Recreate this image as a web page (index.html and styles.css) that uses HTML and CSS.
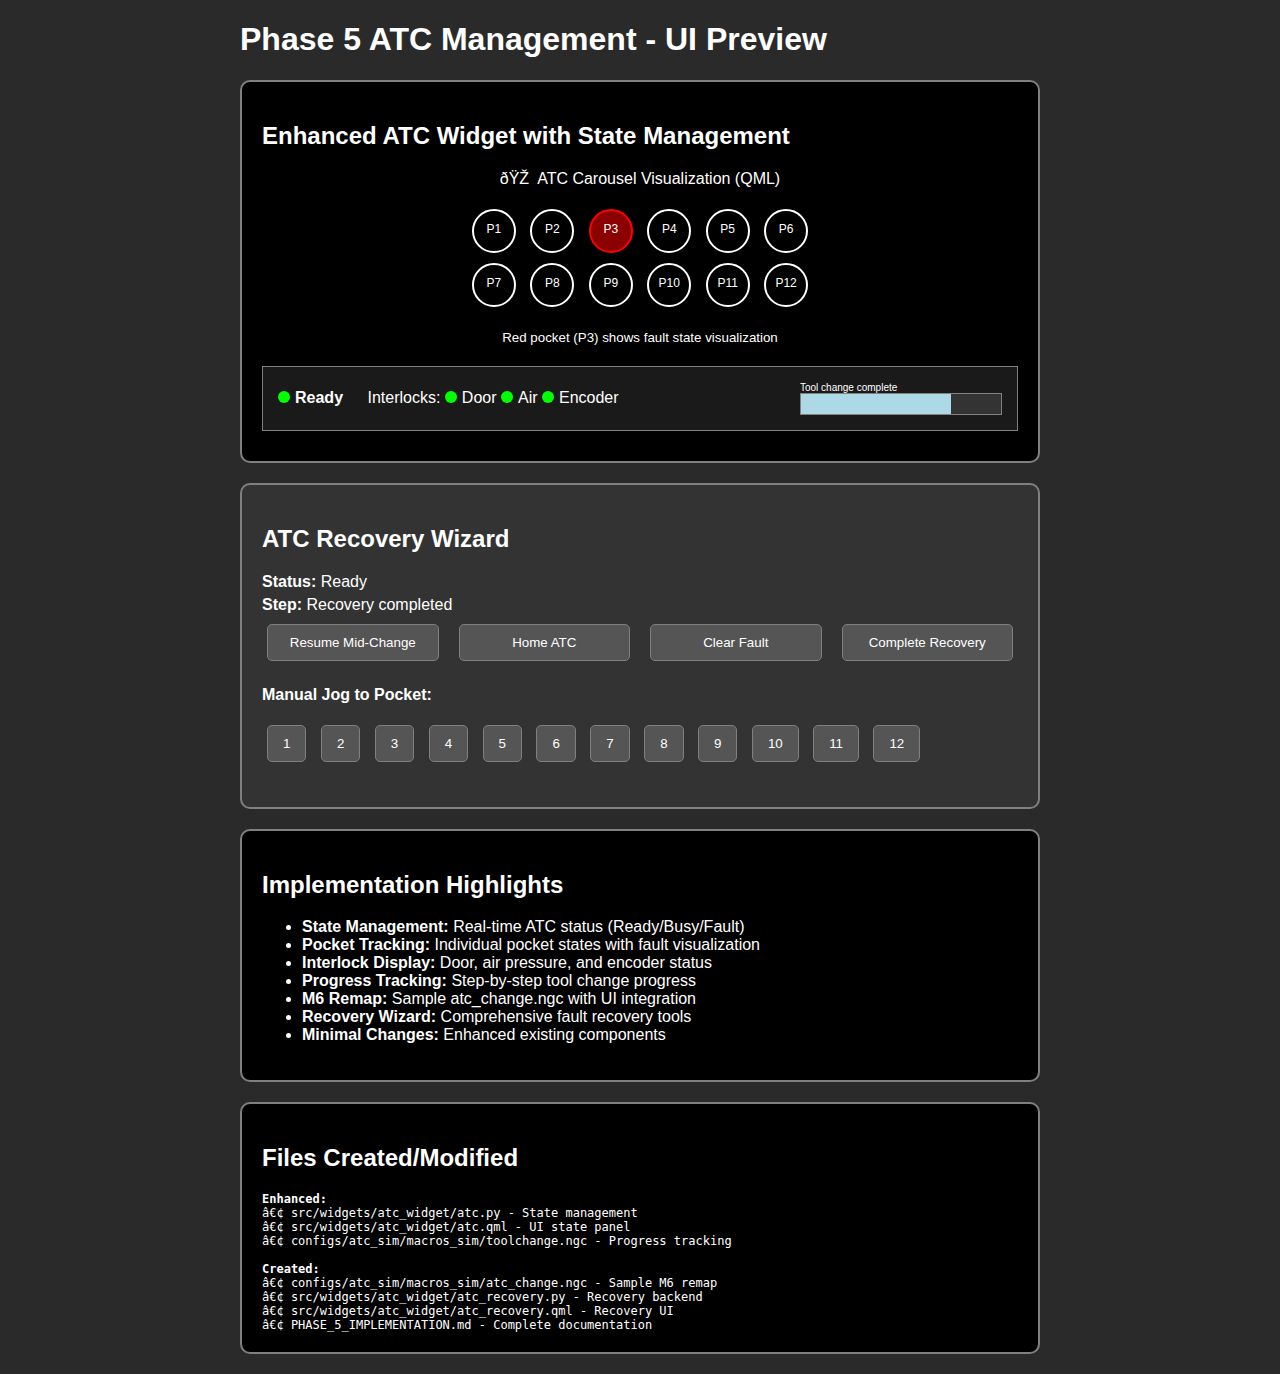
FILE: index.html
```html
<!DOCTYPE html>
<html lang="en">
<head>
  <meta charset="utf-8">
  <meta name="viewport" content="width=device-width, initial-scale=1">
  <title>Phase 5 ATC Management - UI Preview</title>
  <link rel="stylesheet" href="styles.css">
</head>
<body>
  <main class="container">
    <h1 class="page-title">Phase 5 ATC Management - UI Preview</h1>

    <section class="panel">
      <h2 class="panel-title">Enhanced ATC Widget with State Management</h2>
      <div class="carousel">
        <p class="carousel-title">ðŸŽ&nbsp; ATC Carousel Visualization (QML)</p>
        <div class="pockets">
          <div>
            <span class="pocket">P1</span>
            <span class="pocket">P2</span>
            <span class="pocket pocket-fault">P3</span>
            <span class="pocket">P4</span>
            <span class="pocket">P5</span>
            <span class="pocket">P6</span>
          </div>
          <div>
            <span class="pocket">P7</span>
            <span class="pocket">P8</span>
            <span class="pocket">P9</span>
            <span class="pocket">P10</span>
            <span class="pocket">P11</span>
            <span class="pocket">P12</span>
          </div>
        </div>
        <p class="carousel-note"><small>Red pocket (P3) shows fault state visualization</small></p>
      </div>
      <div class="status-bar">
        <div class="status-group">
          <span class="dot"></span><strong>Ready</strong>
          <span class="interlocks">Interlocks:
            <span class="dot"></span>Door
            <span class="dot"></span>Air
            <span class="dot"></span>Encoder</span>
        </div>
        <div class="tool-change">
          <label class="tool-change-label" for="tool-progress">Tool change complete</label>
          <progress class="tool-progress" id="tool-progress" value="75" max="100"></progress>
        </div>
      </div>
    </section>

    <section class="panel panel-wizard">
      <h2 class="panel-title">ATC Recovery Wizard</h2>
      <div class="wizard-status">
        <div><strong>Status:</strong> Ready</div>
        <div><strong>Step:</strong> Recovery completed</div>
      </div>
      <div class="actions">
        <button class="button" type="button">Resume Mid-Change</button>
        <button class="button" type="button">Home ATC</button>
        <button class="button" type="button">Clear Fault</button>
        <button class="button" type="button">Complete Recovery</button>
      </div>
      <p class="jog-title"><strong>Manual Jog to Pocket:</strong></p>
      <div class="jog">
        <button class="button jog-button" type="button">1</button>
        <button class="button jog-button" type="button">2</button>
        <button class="button jog-button" type="button">3</button>
        <button class="button jog-button" type="button">4</button>
        <button class="button jog-button" type="button">5</button>
        <button class="button jog-button" type="button">6</button>
        <button class="button jog-button" type="button">7</button>
        <button class="button jog-button" type="button">8</button>
        <button class="button jog-button" type="button">9</button>
        <button class="button jog-button" type="button">10</button>
        <button class="button jog-button" type="button">11</button>
        <button class="button jog-button" type="button">12</button>
      </div>
    </section>

    <section class="panel">
      <h2 class="panel-title">Implementation Highlights</h2>
      <ul class="highlights">
        <li><strong>State Management:</strong> Real-time ATC status (Ready/Busy/Fault)</li>
        <li><strong>Pocket Tracking:</strong> Individual pocket states with fault visualization</li>
        <li><strong>Interlock Display:</strong> Door, air pressure, and encoder status</li>
        <li><strong>Progress Tracking:</strong> Step-by-step tool change progress</li>
        <li><strong>M6 Remap:</strong> Sample atc_change.ngc with UI integration</li>
        <li><strong>Recovery Wizard:</strong> Comprehensive fault recovery tools</li>
        <li><strong>Minimal Changes:</strong> Enhanced existing components</li>
      </ul>
    </section>

    <section class="panel">
      <h2 class="panel-title">Files Created/Modified</h2>
      <div class="files">
        <strong>Enhanced:</strong><br>
        â€¢ src/widgets/atc_widget/atc.py - State management<br>
        â€¢ src/widgets/atc_widget/atc.qml - UI state panel<br>
        â€¢ configs/atc_sim/macros_sim/toolchange.ngc - Progress tracking<br>
        <br>
        <strong>Created:</strong><br>
        â€¢ configs/atc_sim/macros_sim/atc_change.ngc - Sample M6 remap<br>
        â€¢ src/widgets/atc_widget/atc_recovery.py - Recovery backend<br>
        â€¢ src/widgets/atc_widget/atc_recovery.qml - Recovery UI<br>
        â€¢ PHASE_5_IMPLEMENTATION.md - Complete documentation
      </div>
    </section>
  </main>
</body>
</html>
```
FILE: styles.css
```css
body {
  margin: 20px;
  background: #2a2a2a;
  color: white;
  font-family: "Liberation Sans", Arial, sans-serif;
  font-size: 16px;
  line-height: 18px;
}

.container {
  max-width: 800px;
  margin: 0 auto;
}

.page-title {
  margin: 0 0 22px;
  font-size: 32px;
  line-height: 38px;
}

.panel {
  margin-bottom: 20px;
  padding: 20px;
  border: 2px solid gray;
  border-radius: 10px;
  background: black;
}

.panel-wizard {
  background: #333;
}

.panel-title {
  margin: 20px 0 0;
  font-size: 24px;
  line-height: 27px;
}

.carousel {
  margin: 21px 0 19px;
  text-align: center;
}

.carousel-title {
  margin: 0 0 16px;
}

.pocket {
  display: inline-block;
  width: 40px;
  height: 40px;
  margin: 5px;
  border: 2px solid white;
  border-radius: 50%;
  font-size: 12px;
  line-height: 36px;
}

.pocket-fault {
  border-color: red;
  background: darkred;
}

.carousel-note {
  margin: 16px 0 0;
}

.status-bar {
  display: flex;
  flex-wrap: wrap;
  justify-content: space-between;
  align-items: center;
  gap: 10px;
  margin-bottom: 10px;
  padding: 15px;
  border: 1px solid gray;
  background: #1a1a1a;
}

.status-group {
  padding-bottom: 2px;
}

.dot {
  display: inline-block;
  width: 12px;
  height: 12px;
  margin-right: 5px;
  border-radius: 50%;
  background: lime;
}

.interlocks {
  margin-left: 20px;
}

.tool-change {
  display: flex;
  flex-direction: column;
}

.tool-change-label {
  font-size: 10px;
  line-height: 11px;
}

.tool-progress {
  appearance: none;
  box-sizing: border-box;
  width: 202px;
  height: 22px;
  border: 1px solid gray;
  background: #333;
}

.tool-progress::-webkit-progress-bar {
  background: #333;
}

.tool-progress::-webkit-progress-value {
  background: lightblue;
}

.tool-progress::-moz-progress-bar {
  background: lightblue;
}

.wizard-status {
  display: grid;
  gap: 5px;
  margin-top: 21px;
}

.actions {
  display: grid;
  grid-template-columns: repeat(auto-fit, minmax(150px, 1fr));
  gap: 20px;
  margin: 10px 5px 25px;
}

.button {
  padding: 10px 15px;
  border: 1px solid gray;
  border-radius: 5px;
  background: #555;
  color: white;
  font-family: inherit;
  line-height: 15px;
}

.jog-title {
  margin: 0 0 16px;
}

.jog {
  margin-bottom: 20px;
}

.jog-button {
  margin: 5px;
}

.highlights {
  margin: 20px 0 16px;
  padding-left: 40px;
}

.files {
  margin-top: 21px;
  font-family: "DejaVu Sans Mono", monospace;
  font-size: 12px;
  line-height: 14px;
}
```
